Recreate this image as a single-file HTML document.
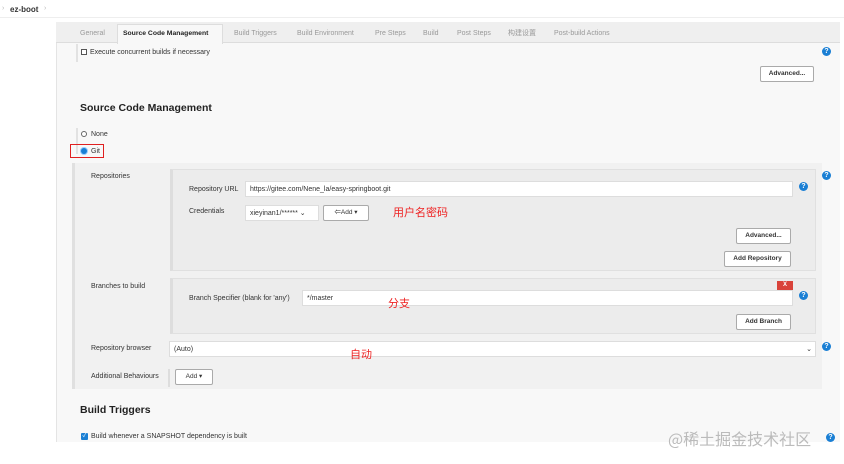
<!DOCTYPE html>
<html><head><meta charset="utf-8"><style>
*{box-sizing:border-box;margin:0;padding:0}
body{width:844px;height:464px;background:#fff;font-family:"Liberation Sans","Noto Sans CJK SC",sans-serif;font-size:7px;color:#333;position:relative;overflow:hidden}
.a{position:absolute}
.t{position:absolute;font-size:7px;margin-top:2px}
.btn{position:absolute;background:#fff;border:1px solid #aaa;border-radius:2px;font-size:6.5px;font-weight:bold;color:#333;text-align:center;line-height:14px;height:16px}
.q{position:absolute;width:9px;height:9px;border-radius:50%;background:#1a7fd4;color:#fff;font-size:7px;font-weight:bold;text-align:center;line-height:9px}
.in{position:absolute;background:#fff;border:1px solid #ddd;height:16px;line-height:15px;padding-left:4px;font-size:7px;color:#333}
.red{color:#e22;font-family:"Noto Sans CJK SC",sans-serif;font-size:11px}
</style></head><body>
<div class="a" style="left:0;top:0;width:844px;height:18px;background:#fff;border-bottom:1px solid #eee"></div>
<div class="a" style="left:2px;top:5px;color:#bbb">›</div>
<div class="a" style="left:10px;top:5px;font-weight:bold;font-size:8px;color:#333">ez-boot</div>
<div class="a" style="left:44px;top:5px;color:#bbb">›</div>
<div class="a" style="left:56px;top:22px;width:784px;height:420px;background:#f8f8f8;border-left:1px solid #e4e4e4"></div>
<div class="a" style="left:56px;top:22px;width:784px;height:21px;background:#efefef;border-bottom:1px solid #ddd"></div>
<div class="a" style="left:117px;top:24px;width:106px;height:20px;background:#f8f8f8;border:1px solid #ddd;border-bottom:none"></div>
<div class="a" style="top:30px;left:0;width:844px;font-size:7px;color:#999">
<span class="a" style="left:80px">General</span>
<span class="a" style="left:123px;color:#222;font-weight:bold;font-size:6.8px">Source Code Management</span>
<span class="a" style="left:234px">Build Triggers</span>
<span class="a" style="left:297px">Build Environment</span>
<span class="a" style="left:375px">Pre Steps</span>
<span class="a" style="left:423px">Build</span>
<span class="a" style="left:457px">Post Steps</span>
<span class="a" style="left:508px;top:-2px">构建设置</span>
<span class="a" style="left:554px">Post-build Actions</span>
</div>
<div class="a" style="left:76px;top:44px;width:2px;height:18px;background:#e2e2e2"></div>
<div class="a" style="left:81px;top:49px;width:6px;height:6px;border:1px solid #555;background:#fff"></div>
<div class="t" style="left:90px;top:47px">Execute concurrent builds if necessary</div>
<div class="q" style="left:822px;top:47px">?</div>
<div class="btn" style="left:760px;top:66px;width:54px">Advanced...</div>
<div class="a" style="left:80px;top:102px;font-size:10.5px;font-weight:bold;color:#222">Source Code Management</div>
<div class="a" style="left:76px;top:128px;width:2px;height:26px;background:#e2e2e2"></div>
<div class="a" style="left:81px;top:131px;width:6px;height:6px;border:1px solid #666;border-radius:50%;background:#fff"></div>
<div class="t" style="left:91px;top:129px">None</div>
<div class="a" style="left:70px;top:144px;width:34px;height:14px;border:1.5px solid #e02020"></div>
<div class="a" style="left:81px;top:148px;width:6px;height:6px;border-radius:50%;background:#1a7fd4;box-shadow:0 0 0 1px #9cf"></div>
<div class="t" style="left:91px;top:146px">Git</div>
<div class="a" style="left:72px;top:163px;width:750px;height:226px;background:#f1f1f1;border-left:3px solid #e0e0e0"></div>
<div class="q" style="left:822px;top:171px">?</div>
<div class="t" style="left:91px;top:171px">Repositories</div>
<div class="a" style="left:170px;top:169px;width:646px;height:102px;background:#ececec;border:1px solid #e0e0e0;border-left:3px solid #ddd"></div>
<div class="t" style="left:189px;top:184px">Repository URL</div>
<div class="in" style="left:245px;top:181px;width:548px">https://gitee.com/Nene_la/easy-springboot.git</div>
<div class="q" style="left:799px;top:182px">?</div>
<div class="t" style="left:189px;top:206px">Credentials</div>
<div class="in" style="left:245px;top:205px;width:74px">xieyinan1/****** ⌄</div>
<div class="btn" style="left:323px;top:205px;width:46px;font-weight:normal">⇐Add ▾</div>
<div class="a red" style="left:393px;top:204px">用户名密码</div>
<div class="btn" style="left:736px;top:228px;width:55px">Advanced...</div>
<div class="btn" style="left:724px;top:251px;width:67px">Add Repository</div>
<div class="t" style="left:91px;top:281px">Branches to build</div>
<div class="a" style="left:170px;top:278px;width:646px;height:56px;background:#ececec;border:1px solid #e0e0e0;border-left:3px solid #ddd"></div>
<div class="a" style="left:777px;top:281px;width:16px;height:9px;background:#d9433a;color:#fff;font-size:6px;text-align:center;line-height:9px;font-weight:bold">X</div>
<div class="t" style="left:189px;top:293px">Branch Specifier (blank for 'any')</div>
<div class="in" style="left:302px;top:290px;width:491px">*/master</div>
<div class="q" style="left:799px;top:291px">?</div>
<div class="a red" style="left:388px;top:295px">分支</div>
<div class="btn" style="left:736px;top:314px;width:55px">Add Branch</div>
<div class="t" style="left:91px;top:343px">Repository browser</div>
<div class="in" style="left:169px;top:341px;width:647px">(Auto)<span style="position:absolute;right:3px">⌄</span></div>
<div class="q" style="left:822px;top:342px">?</div>
<div class="a red" style="left:350px;top:346px">自动</div>
<div class="t" style="left:91px;top:371px">Additional Behaviours</div>
<div class="a" style="left:168px;top:369px;width:2px;height:18px;background:#ddd"></div>
<div class="btn" style="left:175px;top:369px;width:38px;font-weight:normal">Add ▾</div>
<div class="a" style="left:80px;top:404px;font-size:10.5px;font-weight:bold;color:#222">Build Triggers</div>
<div class="a" style="left:81px;top:433px;width:7px;height:7px;background:#1a7fd4;border-radius:1px;color:#fff;font-size:6px;line-height:7px;text-align:center">✓</div>
<div class="t" style="left:91px;top:431px">Build whenever a SNAPSHOT dependency is built</div>
<div class="q" style="left:826px;top:433px">?</div>
<div class="a" style="left:668px;top:426px;font-size:16px;color:#bbb;font-family:'Noto Sans CJK SC',sans-serif">@稀土掘金技术社区</div>
</body></html>
